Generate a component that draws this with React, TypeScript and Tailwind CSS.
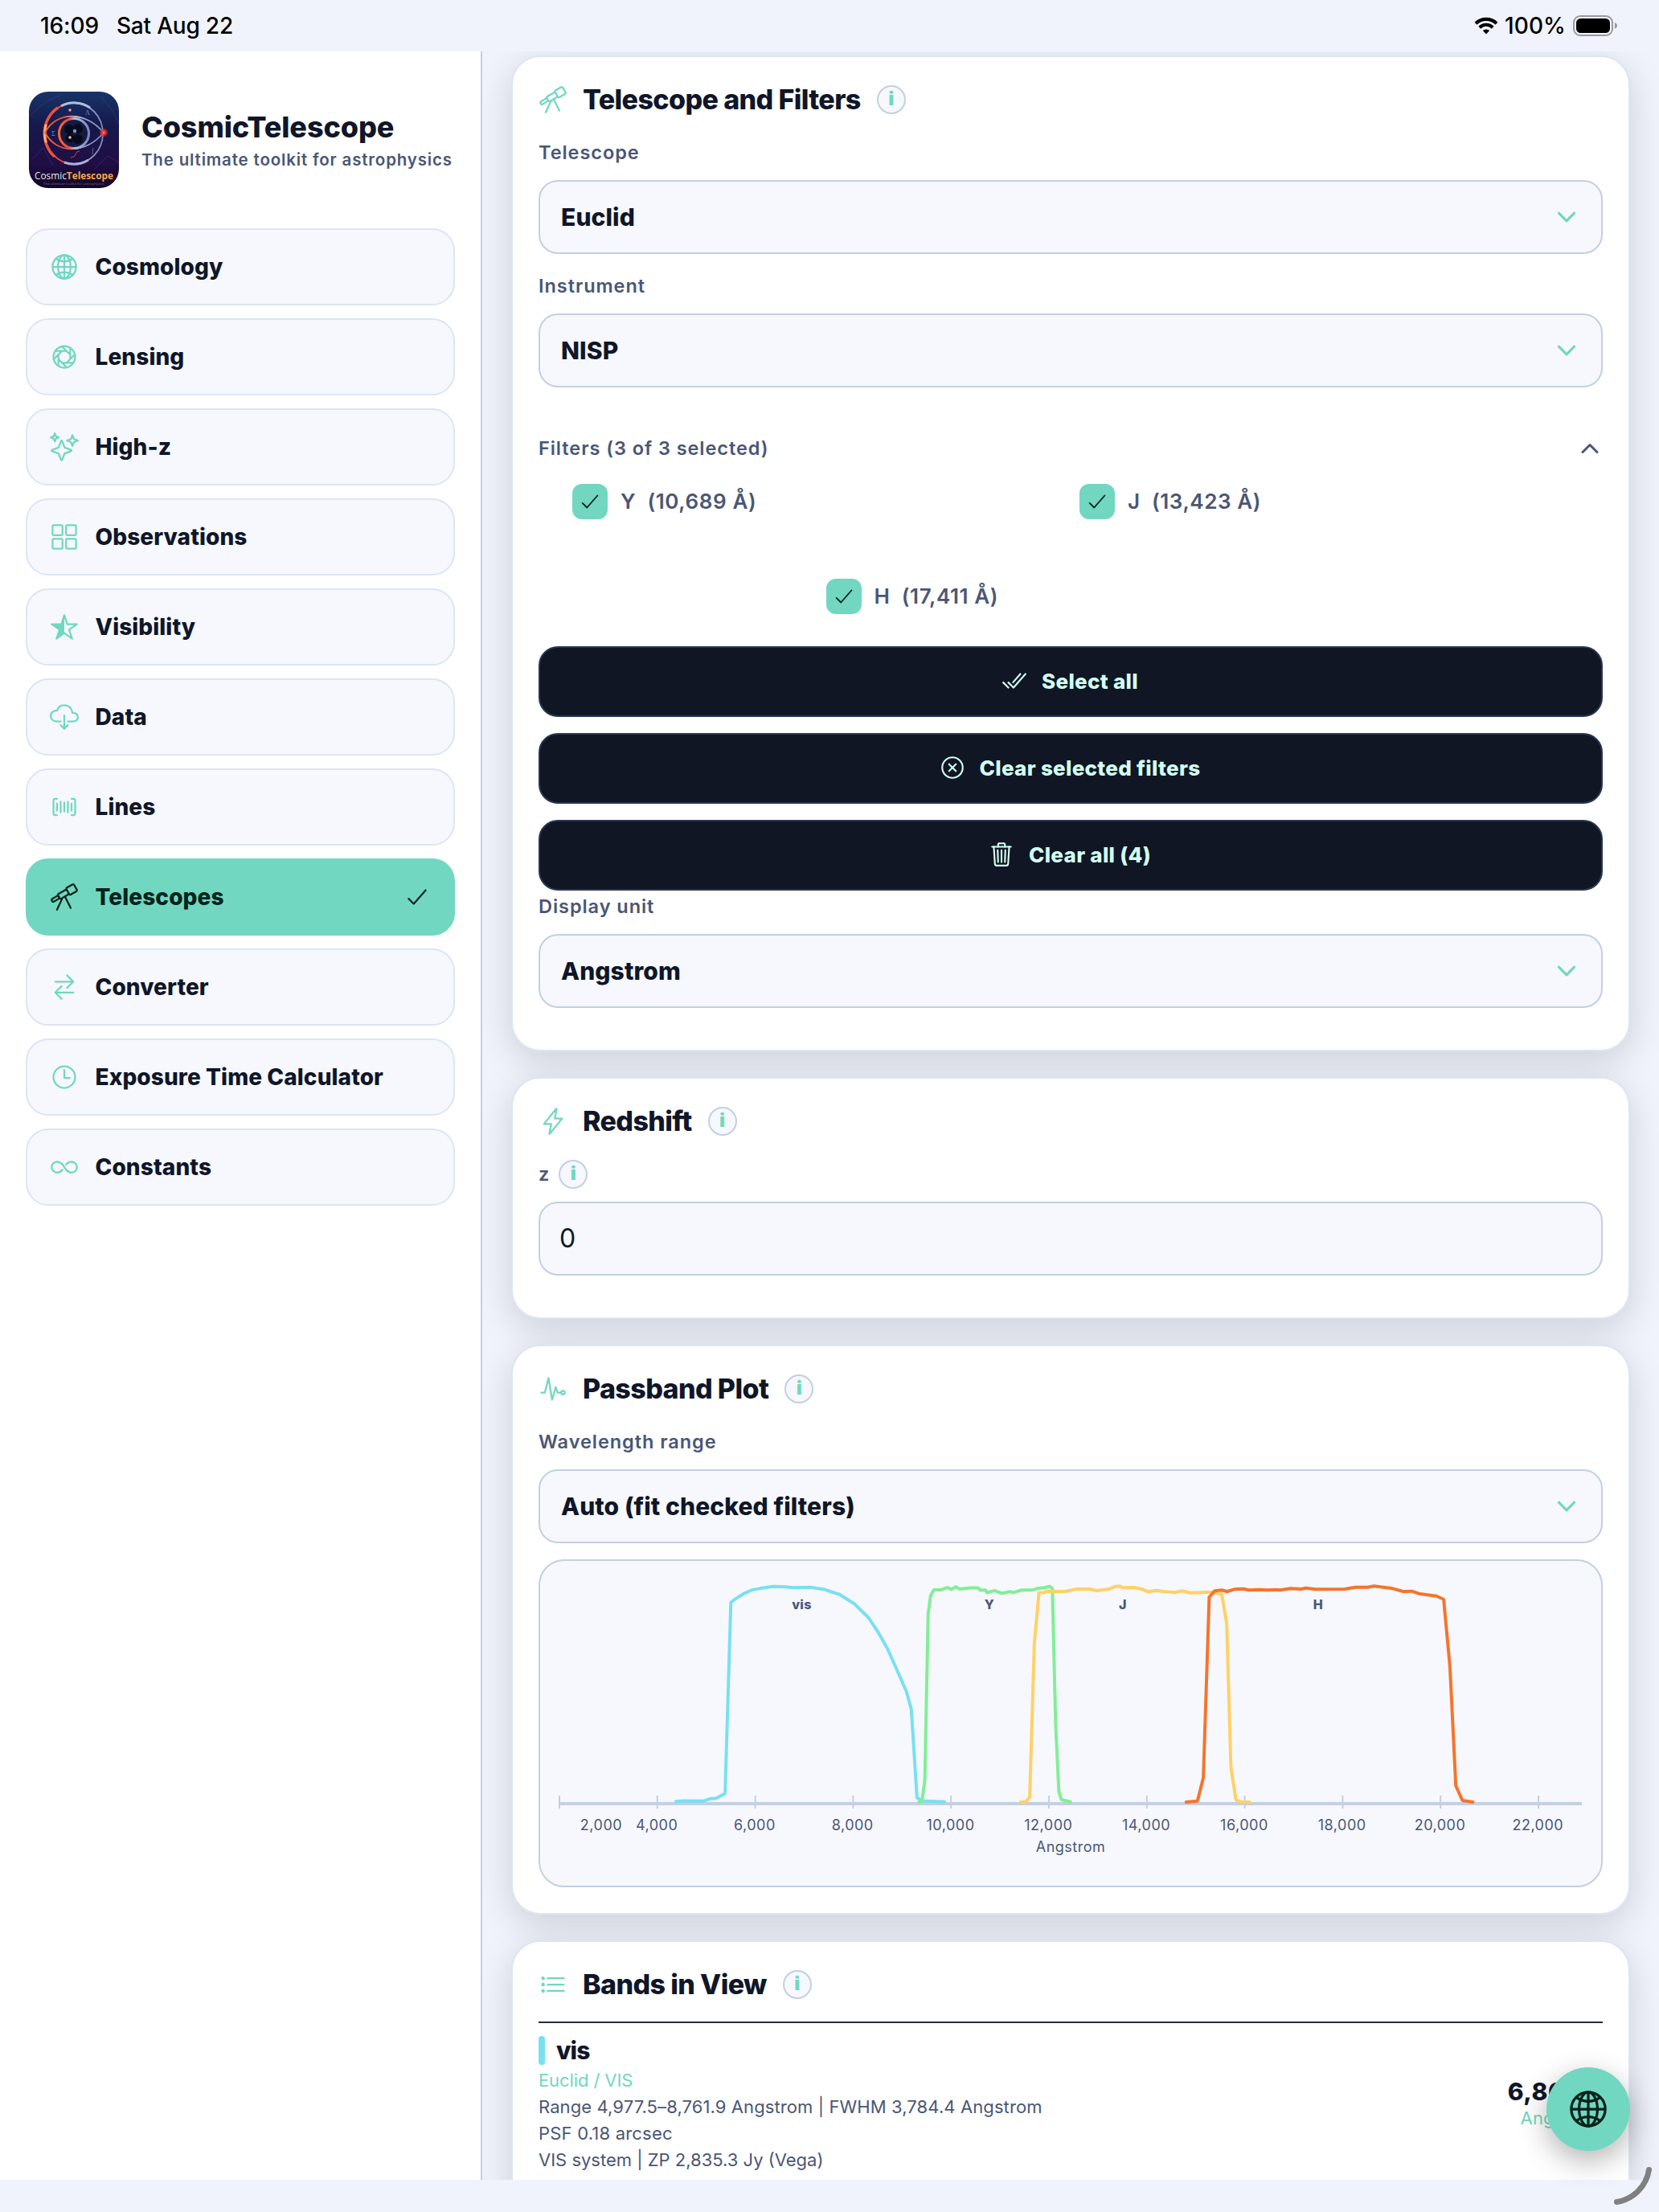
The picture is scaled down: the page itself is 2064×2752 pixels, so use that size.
import React from "react";
import {
  IoApertureOutline,
  IoBarcodeOutline,
  IoCheckmarkDoneOutline,
  IoCheckmarkOutline,
  IoChevronDown,
  IoChevronUp,
  IoCloseCircleOutline,
  IoCloudDownloadOutline,
  IoFlashOutline,
  IoGlobeOutline,
  IoGridOutline,
  IoInfiniteOutline,
  IoListOutline,
  IoPulseOutline,
  IoSparklesOutline,
  IoStarHalfOutline,
  IoSwapHorizontalOutline,
  IoTelescopeOutline,
  IoTimeOutline,
  IoTrashOutline,
} from "react-icons/io5";
import type { IconType } from "react-icons";

type NavEntry = { label: string; icon: IconType; active?: boolean };

const NAV: NavEntry[] = [
  { label: "Cosmology", icon: IoGlobeOutline },
  { label: "Lensing", icon: IoApertureOutline },
  { label: "High-z", icon: IoSparklesOutline },
  { label: "Observations", icon: IoGridOutline },
  { label: "Visibility", icon: IoStarHalfOutline },
  { label: "Data", icon: IoCloudDownloadOutline },
  { label: "Lines", icon: IoBarcodeOutline },
  { label: "Telescopes", icon: IoTelescopeOutline, active: true },
  { label: "Converter", icon: IoSwapHorizontalOutline },
  { label: "Exposure Time Calculator", icon: IoTimeOutline },
  { label: "Constants", icon: IoInfiniteOutline },
];

function StatusBar() {
  return (
    <header className="flex h-16 shrink-0 items-center justify-between pr-[51px] pl-[50px] text-[28px] font-medium text-black">
      <div className="flex gap-[22px]">
        <span className="tracking-[-0.1px]">16:09</span>
        <span className="tracking-[-0.2px]">Sat Aug 22</span>
      </div>
      <div className="flex items-center">
        <svg className="h-[22px] w-[30px]" viewBox="0 0 30 22" fill="none" stroke="#000">
          <path d="M2 8.2a18.6 18.6 0 0 1 26 0" strokeWidth="4.2" />
          <path d="M6.8 13.2a11.7 11.7 0 0 1 16.4 0" strokeWidth="4" />
          <path d="M15 21.5l-4.2-4.4a6 6 0 0 1 8.4 0z" fill="#000" stroke="none" />
        </svg>
        <span className="ml-2 tracking-[0.1px]">100%</span>
        <svg className="ml-[9px] h-[26px] w-[56px]" viewBox="0 0 56 26">
          <rect x="1" y="1" width="48" height="24" rx="8" fill="none" stroke="#98999d" strokeWidth="2" />
          <rect x="4" y="4" width="42" height="18" rx="5.5" fill="#000" />
          <path d="M52 9c4 1.500 4 6.500 0 8z" fill="#98999d" />
        </svg>
      </div>
    </header>
  );
}

function Logo() {
  return (
    <svg className="h-[120px] w-[112px] shrink-0 rounded-[24px]" viewBox="0 0 112 120">
      <defs>
        <linearGradient id="sky" x1="0" y1="0" x2="0" y2="1">
          <stop offset="0" stopColor="#183468" />
          <stop offset="0.35" stopColor="#16194c" />
          <stop offset="0.75" stopColor="#200e44" />
          <stop offset="1" stopColor="#120724" />
        </linearGradient>
        <linearGradient id="ring" x1="0" y1="0" x2="1" y2="0">
          <stop offset="0" stopColor="#ff6a35" />
          <stop offset="0.3" stopColor="#e8453c" />
          <stop offset="0.55" stopColor="#b4bdd8" />
          <stop offset="1" stopColor="#7588bd" />
        </linearGradient>
        <radialGradient id="spark">
          <stop offset="0" stopColor="#ffb0a0" />
          <stop offset="0.35" stopColor="#ff2a20" />
          <stop offset="1" stopColor="#ff2a20" stopOpacity="0" />
        </radialGradient>
      </defs>
      <rect width="112" height="120" fill="url(#sky)" />
      <path d="M0 30L22 12L40 4M90 6L104 24L112 40M4 84L18 70L30 92M82 96L98 80L112 88" stroke="#5f4aa0" strokeWidth="0.6" opacity="0.6" fill="none" />
      <ellipse cx="56" cy="52" rx="36" ry="38" fill="none" stroke="url(#ring)" strokeWidth="1.800" />
      <path d="M40 18A36 38 0 0 1 76 20" fill="none" stroke="#a9c0dc" strokeWidth="3" />
      <path d="M44 88A36 38 0 0 0 74 85" fill="none" stroke="#a9b2d4" strokeWidth="3" />
      <path d="M36 20A36 38 0 0 0 32 81" fill="none" stroke="#f0503a" strokeWidth="3.600" />
      <path d="M21 42A36 38 0 0 0 21 62" fill="none" stroke="#ffb070" strokeWidth="3" strokeLinecap="round" />
      <path d="M20 51C34 24 70 24 93 51C70 78 34 78 20 51z" fill="none" stroke="url(#ring)" strokeWidth="1.800" />
      <circle cx="56" cy="52" r="18.500" fill="#141b42" stroke="url(#ring)" strokeWidth="3" />
      <g fill="#070a1c">
        <circle cx="50" cy="47" r="6" />
        <circle cx="61" cy="46" r="6" />
        <circle cx="51" cy="58" r="5.500" />
        <circle cx="61" cy="59" r="6" />
      </g>
      <circle cx="57" cy="49" r="2.200" fill="#8894bb" />
      <circle cx="51" cy="57" r="1.800" fill="#ffb89a" />
      <circle cx="51" cy="23" r="1.800" fill="#e8a58a" />
      <circle cx="93" cy="51" r="6" fill="url(#spark)" />
      <path d="M52 82q5 0 6-4t5-4" fill="none" stroke="#d04a40" strokeWidth="0.900" />
      <g fill="#7f86b8" fontFamily="Liberation Serif, serif" fontSize="8">
        <text x="70" y="29">Λ</text>
        <text x="28" y="55">Σ</text>
        <text x="78" y="76">∫</text>
      </g>
      <text x="7" y="109" fontFamily="Open Sans, sans-serif" fontSize="12.500" fill="#e6e6ee" textLength="98" lengthAdjust="spacingAndGlyphs">
        Cosmic<tspan fill="#f5a64b" fontWeight="700">Telescope</tspan>
      </text>
      <text x="18" y="115.500" fontFamily="Open Sans, sans-serif" fontSize="4.200" fill="#75689c" textLength="76" lengthAdjust="spacingAndGlyphs">
        The ultimate toolkit for astrophysics
      </text>
    </svg>
  );
}

function NavItem({ label, icon: Icon, active }: NavEntry) {
  return (
    <a
      className={
        active
          ? "flex h-24 items-center rounded-[28px] border-2 border-[#71d7c0] bg-[#71d7c0] pr-7 pl-7 text-[#06231c]"
          : "flex h-24 items-center rounded-[28px] border-2 border-[#dde5f3] bg-[#f6f8fd] pr-7 pl-7 text-[#101629]"
      }
    >
      <Icon className={active ? "size-9 text-[#06231c]" : "size-9 text-[#71d7c0]"} />
      <span className="ml-[20.5px] grow text-[28px] leading-9 font-extrabold tracking-[0.1px]">{label}</span>
      {active && <IoCheckmarkOutline className="size-[34px]" />}
    </a>
  );
}

function Sidebar() {
  return (
    <aside className="w-[600px] shrink-0 border-r-2 border-[#c3cfe3] bg-white px-8 pt-[50px]">
      <div className="flex items-center gap-7 pl-1">
        <Logo />
        <div className="flex flex-col gap-1 pt-[2px] whitespace-nowrap">
          <h1 className="text-[36px] leading-[44px] font-extrabold tracking-[-0.1px] text-[#101629]">CosmicTelescope</h1>
          <p className="text-[20.5px] leading-[30px] font-semibold tracking-[0.83px] text-[#4a5676]">The ultimate toolkit for astrophysics</p>
        </div>
      </div>
      <nav className="mt-[50px] flex flex-col gap-4">
        {NAV.map((n) => (
          <NavItem key={n.label} {...n} />
        ))}
      </nav>
    </aside>
  );
}

function Info() {
  return (
    <span className="flex size-9 items-center justify-center rounded-full border-2 border-[#c3cfe3] bg-[#f6f8fd] pb-[2px] text-[24px] leading-none font-black text-[#71d7c0]">
      i
    </span>
  );
}

function Card({ title, icon: Icon, className, children }: { title: string; icon: IconType; className: string; children: React.ReactNode }) {
  return (
    <section className={`rounded-[36px] border-2 border-[#dde5f3] bg-white px-8 pt-8 shadow-[0_12px_46px_rgba(0,0,0,0.15)] ${className}`}>
      <div className="flex h-[42px] items-center">
        <Icon className="size-9 text-[#71d7c0]" />
        <h2 className="mr-5 ml-[19px] text-[34px] leading-[42px] font-extrabold tracking-[-0.6px] text-[#101629]">{title}</h2>
        <Info />
      </div>
      {children}
    </section>
  );
}

function Label({ className, children }: { className?: string; children: React.ReactNode }) {
  return <div className={`h-[30px] text-[23.5px] leading-[30px] font-semibold tracking-[0.95px] text-[#4a5676] ${className ?? ""}`}>{children}</div>;
}

function Select({ value, className }: { value: string; className: string }) {
  return (
    <div className={`flex h-[92px] items-center justify-between rounded-[24px] border-2 border-[#c3cfe3] bg-[#f6f8fd] px-[26px] ${className}`}>
      <span className="text-[30px] leading-9 font-extrabold tracking-[0.1px] text-[#101629]">{value}</span>
      <IoChevronDown className="size-[34px] text-[#71d7c0]" />
    </div>
  );
}

function Filter({ name, wavelength }: { name: string; wavelength: string }) {
  return (
    <div className="flex h-11 w-[631px] items-center pl-[11px]">
      <span className="flex size-11 items-center justify-center rounded-[12px] bg-[#71d7c0] text-[#06231c]">
        <IoCheckmarkOutline className="size-[30px]" />
      </span>
      <span className="ml-4 text-[26px] leading-8 font-semibold tracking-[0.6px] whitespace-pre text-[#4a5676]">{`${name}  (${wavelength} Å)`}</span>
    </div>
  );
}

function DarkButton({ icon: Icon, label }: { icon: IconType; label: string }) {
  return (
    <button className="flex h-[88px] w-full items-center justify-center gap-[17px] rounded-[24px] border-2 border-[#2a3652] bg-[#101623] pr-[3px] pb-[2px] text-[26px] font-extrabold text-[#d3fff3]">
      <Icon className="size-[34px]" />
      <span className="tracking-[0.3px]">{label}</span>
    </button>
  );
}

/* Plot geometry: x in the panel's coordinate space, where 2,000 Å sits at x = 696. */
const AXIS_X = 696;
const AXIS_STEP = 121.8;
const TICKS = ["2,000", "4,000", "6,000", "8,000", "10,000", "12,000", "14,000", "16,000", "18,000", "20,000", "22,000"];

const CURVES = [
  {
    name: "vis",
    color: "#79e0f1",
    labelX: 997.5,
    points:
      "840.9,2241.3 849.6,2240.4 875.1,2240.8 882.8,2238.1 891.4,2237.2 897,2234.1 902.1,2231.4 909.3,1993.5 915.9,1988.6 926.1,1982.3 936.3,1977.9 946.5,1976.1 961.8,1973.8 977.1,1974.3 987.3,1975.2 1007.8,1974.7 1025.6,1977.4 1034.3,1980.5 1044.5,1983.7 1062.9,1995.3 1080.2,2012.2 1091.9,2029.6 1103.7,2050.2 1114.9,2075.2 1127.7,2104.2 1133.8,2126.5 1140.9,2236.8 1148.1,2240.4 1175.1,2241.7",
  },
  {
    name: "Y",
    color: "#82ee97",
    labelX: 1231,
    points:
      "1143,2242.1 1147,2241.3 1150.6,2214.9 1154.7,2008.2 1157.8,1985 1161.8,1977.9 1171,1977.9 1178.7,1975.2 1183.8,1977.4 1188.9,1974.3 1194,1977 1206.7,1975.6 1216.9,1975.6 1219.5,1978.3 1226.1,1978.3 1228.2,1981.4 1237.3,1978.8 1246.5,1982.3 1256.7,1980.1 1260.3,1981.4 1270.5,1978.3 1285.8,1977.9 1289.4,1976.5 1298.6,1975.2 1306.2,1973.8 1309.3,1976.1 1311.3,2061.8 1313.4,2146.6 1317.4,2229.2 1320.5,2239 1331.7,2241.7",
  },
  {
    name: "J",
    color: "#ffd166",
    labelX: 1397,
    points:
      "1269.7,2242 1276,2241.7 1281.1,2236 1286.9,2043.3 1292.6,1981.7 1299.3,1981.3 1301.9,1979.7 1325.3,1980 1339.3,1977 1356.4,1977 1364.2,1979 1379.8,1977 1387.6,1973.7 1392.8,1973.3 1398,1975.3 1410.9,1975 1421.3,1977.3 1428.6,1980.3 1439.5,1978.7 1447.3,1980 1461.8,1981.3 1470.6,1979.3 1481,1981.7 1504.4,1980.7 1514.8,1982.3 1520,1983.3 1526.2,2020 1531.4,2198.3 1537.6,2239.3 1543.8,2241.7 1554.7,2242",
  },
  {
    name: "H",
    color: "#f6742c",
    labelX: 1640,
    points:
      "1475.8,2242 1489.8,2240.7 1497.1,2211.7 1504.4,1987.3 1511.1,1979.3 1519.9,1978.3 1526.7,1980 1535.5,1977.3 1546.9,1976.7 1553.7,1978.3 1566.7,1977.7 1577,1978.3 1587.4,1977.7 1592.6,1978.3 1605.6,1976.3 1618.6,1977 1624.8,1975.7 1636.7,1977.3 1673.1,1977 1686.1,1974.7 1701.6,1974.7 1709.4,1973.3 1732.8,1976.3 1745.8,1980 1756.2,1979.7 1765.5,1982.7 1787.3,1985.7 1796.1,1989.7 1803.9,2073.3 1811.2,2221.7 1819.5,2240 1832.5,2242",
  },
];

function PassbandPlot() {
  return (
    <div className="mt-5 h-[408px] overflow-hidden rounded-[32px] border-2 border-[#c3cfe3] bg-[#f6f8fd]">
      <svg className="block h-[404px] w-[1320px]" viewBox="672 1942 1320 404" fontFamily="Inter, sans-serif">
        <rect x="696" y="2242" width="1272" height="4" fill="#c3cfe3" />
        {TICKS.map((t, i) => (
          <g key={t}>
            <rect x={AXIS_X + i * AXIS_STEP - 1} y="2234" width="2" height="16" fill="#c3cfe3" />
            <text x={i === 0 ? 748 : AXIS_X + i * AXIS_STEP - 0.7} y="2276.5" textAnchor="middle" fontSize="18" letterSpacing="0.5" fill="#4a5676">
              {t}
            </text>
          </g>
        ))}
        <text x="1332" y="2304" textAnchor="middle" fontSize="18" letterSpacing="0.5" fill="#4a5676">
          Angstrom
        </text>
        {CURVES.map((c) => (
          <polyline key={c.name} points={c.points} fill="none" stroke={c.color} strokeWidth="4" strokeLinejoin="round" strokeLinecap="round" />
        ))}
        {CURVES.map((c) => (
          <text key={c.name} x={c.labelX} y="2002" textAnchor="middle" fontSize="16" fontWeight="800" letterSpacing="0.400" fill="#4a5676">
            {c.name}
          </text>
        ))}
      </svg>
    </div>
  );
}

function BandRow() {
  return (
    <div className="mt-[25px] flex items-center justify-between border-t-2 border-[#1f2a44] pt-4 text-[22px] leading-[33px] text-[#4a5676]">
      <div>
        <div className="mb-[3px] flex h-9 items-center gap-[14px]">
          <span className="h-9 w-2 rounded-[4px] bg-[#79e0f1]" />
          <span className="text-[30px] leading-9 font-extrabold tracking-[-0.9px] text-[#101629]">vis</span>
        </div>
        <p className="tracking-[-0.1px] text-[#71d7c0]">Euclid / VIS</p>
        <p className="tracking-[0.1px]">Range 4,977.5–8,761.9 Angstrom | FWHM 3,784.4 Angstrom</p>
        <p className="tracking-[0.2px]">PSF 0.18 arcsec</p>
        <p>VIS system | ZP 2,835.3 Jy (Vega)</p>
      </div>
      <div className="text-right">
        <p className="text-[30px] leading-[34px] font-extrabold tracking-[0.5px] text-[#101629]">6,869.7</p>
        <p className="tracking-[0.2px] text-[#71d7c0]">Angstrom</p>
      </div>
    </div>
  );
}

export default function App() {
  return (
    <div className="relative flex h-[2752px] w-[2064px] flex-col overflow-hidden bg-[#f0f3fc] font-['Inter',sans-serif]">
      <StatusBar />
      <div className="flex h-[2648px] shrink-0 overflow-hidden">
        <Sidebar />
        <main className="flex grow flex-col gap-8 overflow-hidden px-9 pt-[5px]">
          <Card title="Telescope and Filters" icon={IoTelescopeOutline} className="h-[1239px] shrink-0">
            <Label className="mt-[30px]">Telescope</Label>
            <Select value="Euclid" className="mt-[19px]" />
            <Label className="mt-[25px]">Instrument</Label>
            <Select value="NISP" className="mt-[19px]" />
            <div className="mt-[60px] flex items-center justify-between">
              <Label>Filters (3 of 3 selected)</Label>
              <IoChevronUp className="size-8 text-[#4a5676]" />
            </div>
            <div className="mt-7 flex flex-wrap justify-center gap-y-[74px]">
              <Filter name="Y" wavelength="10,689" />
              <Filter name="J" wavelength="13,423" />
              <Filter name="H" wavelength="17,411" />
            </div>
            <div className="mt-10 flex flex-col gap-5">
              <DarkButton icon={IoCheckmarkDoneOutline} label="Select all" />
              <DarkButton icon={IoCloseCircleOutline} label="Clear selected filters" />
              <DarkButton icon={IoTrashOutline} label="Clear all (4)" />
            </div>
            <Label className="mt-[5px]">Display unit</Label>
            <Select value="Angstrom" className="mt-[19px]" />
          </Card>

          <Card title="Redshift" icon={IoFlashOutline} className="h-[301px] shrink-0">
            <div className="mt-[27px] flex h-9 items-center gap-[11px]">
              <Label>z</Label>
              <Info />
            </div>
            <div className="mt-4 flex h-[92px] items-center rounded-[24px] border-2 border-[#c3cfe3] bg-[#f6f8fd] px-6 text-[32px] text-[#101629]">0</div>
          </Card>

          <Card title="Passband Plot" icon={IoPulseOutline} className="h-[709px] shrink-0">
            <Label className="mt-[30px]">Wavelength range</Label>
            <Select value="Auto (fit checked filters)" className="mt-[19px]" />
            <PassbandPlot />
          </Card>

          <Card title="Bands in View" icon={IoListOutline} className="h-[400px] shrink-0">
            <BandRow />
          </Card>
        </main>
      </div>

      <button className="absolute right-9 bottom-[76px] flex size-[104px] items-center justify-center rounded-full bg-[#71d7c0] text-[#06231c] shadow-[0_12px_36px_rgba(0,0,0,0.3)]">
        <IoGlobeOutline className="size-[52px]" />
      </button>
      <svg className="absolute right-0 bottom-0 size-[64px]" viewBox="0 0 64 64" fill="none">
        <path d="M51.500 11.500A48 48 0 0 1 11.500 51.500" stroke="#808080" strokeWidth="7" strokeLinecap="round" />
      </svg>
    </div>
  );
}
